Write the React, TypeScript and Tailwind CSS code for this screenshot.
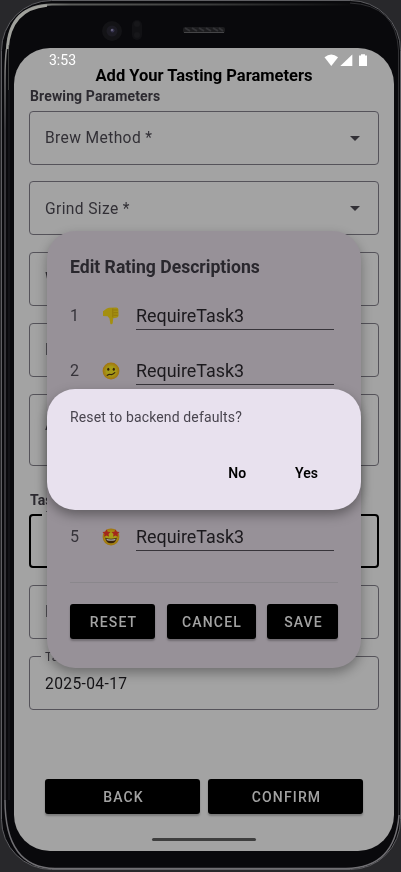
import React from "react";

function Field({ label, value, caret, className = "", floating }: { label?: string; value?: string; caret?: boolean; className?: string; floating?: string }) {
  return (
    <div className={`relative flex w-[350px] shrink-0 items-center justify-between rounded-[4px] px-[15px] text-[15.6px] tracking-[0.37px] ${className}`}>
      {floating && (
        <span className="absolute -top-[8px] left-[11px] bg-[#a3a3a3] px-[4px] text-[12px] leading-[16px] tracking-[0.3px] text-[#38363c]">{floating}</span>
      )}
      {label && <span className="pt-[2px] text-[#323036]">{label}</span>}
      {value && <span className="pt-[3px] text-[#141316]">{value}</span>}
      {caret && (
        <svg width="10" height="5" viewBox="0 0 10 5" className="mr-[3px]">
          <path d="M0 0H10L5 5Z" fill="#323036" />
        </svg>
      )}
    </div>
  );
}

function Button({ children, className }: { children: React.ReactNode; className: string }) {
  return (
    <div className={`flex h-[35px] items-center justify-center rounded-[3px] bg-black pt-[2px] pl-[2px] text-[14px] font-medium tracking-[1.15px] text-[#a3a3a3] shadow-[0_2px_2px_rgba(0,0,0,0.25)] ${className}`}>
      {children}
    </div>
  );
}

function ThumbDown() {
  return (
    <svg width="18" height="18" viewBox="0 0 18 18">
      <path d="M1 4.2 4.8 1.6 7 .8 14 .5Q16.2.4 16.4 2.5L16.6 8.3Q16.5 10.6 14.4 10.7L11.2 11.2 10.7 16.2Q9.7 18.1 8.3 16.7L7.5 11.4 5.5 9.3 1 9Z" fill="#a48f10" />
      <path d="M11.5 3H15.8M11.5 5.7H16M11.5 8.3H15.8M10.8 1.5V10.5" stroke="#8c7009" strokeWidth=".7" fill="none" />
    </svg>
  );
}

function Face({ kind }: { kind: "unsure" | "star" }) {
  return (
    <svg width="18" height="18" viewBox="0 0 18 18">
      <defs>
        <radialGradient id={`face-${kind}`}>
          <stop offset="0.5" stopColor="#a69c18" />
          <stop offset="1" stopColor="#a1730e" />
        </radialGradient>
      </defs>
      <circle cx="9" cy="9" r="8.4" fill={`url(#face-${kind})`} />
      {kind === "star" ? (
        <>
          <path d="M4.5 1.3 5.7 3.8 8.6 4.1 6.5 6.1 7.1 8.8 4.6 7.5 2 8.8 2.5 6 .4 4.1 3.4 3.7ZM13.5 1.3 14.7 3.8 17.6 4.1 15.5 6.1 16.1 8.8 13.4 7.5 11 8.8 11.5 6 9.4 4.1 12.4 3.7Z" fill="#a3271c" />
          <path d="M3.2 9.7Q9 11.6 14.8 9.7 14 15.2 9 15.2T3.2 9.7" fill="#38200a" />
          <path d="M4.3 10.7Q9 12.1 13.7 10.7L13.2 12.2Q9 13.2 4.8 12.2Z" fill="#a3a3a3" />
        </>
      ) : (
        <>
          <ellipse cx="6.3" cy="7.2" rx="1.1" ry="1.5" fill="#35220a" />
          <ellipse cx="11.8" cy="7.2" rx="1.1" ry="1.5" fill="#35220a" />
          <path d="M5.2 13.4Q7 11.8 8.7 12.5T12.8 10.7" stroke="#35220a" strokeWidth="1.2" strokeLinecap="round" fill="none" />
        </>
      )}
    </svg>
  );
}

function StatusBar() {
  return (
    <div className="flex h-[20px] items-center justify-between pt-[4px] pr-[26px] pl-[35px]">
      <span className="text-[14px] leading-[16px] text-white">3:53</span>
      <svg width="44" height="13" viewBox="0 0 44 13" fill="white" className="mt-px">
        <path d="M.5 3.3Q7.2-2.3 14.1 3.3L7.3 12Z" />
        <path d="M28.3.5V12H16.3Z" />
        <path d="M35 1.5H37V.3H41V1.5H43V12H35Z" />
      </svg>
    </div>
  );
}

function RatingRow({ n, icon }: { n: number; icon: React.ReactNode }) {
  return (
    <div className="flex h-[55.33px] items-center">
      <span className="w-[32px] text-[16px] text-[#36333a]">{n}</span>
      <span className="w-[34px]">{icon}</span>
      <span className="flex h-[28px] w-[198px] items-center border-b border-[#37343a] pt-[2px] text-[17.9px] text-[#1b191d]">RequireTask3</span>
    </div>
  );
}

function RatingDialog() {
  return (
    <div className="absolute top-[231px] left-[47px] flex h-[437px] w-[314px] flex-col rounded-[28px] bg-[#979198] px-[23px] pt-[24px] shadow-[0_5px_12px_rgba(0,0,0,0.32)]">
      <div className="text-[17.6px] leading-[24px] font-bold text-[#29272d]">Edit Rating Descriptions</div>
      <div className="mt-[9px] flex flex-col">
        <RatingRow n={1} icon={<ThumbDown />} />
        <RatingRow n={2} icon={<Face kind="unsure" />} />
        <div className="h-[110.67px]" />
        <RatingRow n={5} icon={<Face kind="star" />} />
      </div>
      <div className="mt-[17px] h-px w-[268px] bg-[#8a878c]" />
      <div className="mt-[21px] flex w-[268px] justify-between">
        <Button className="w-[85px]">RESET</Button>
        <Button className="w-[89px]">CANCEL</Button>
        <Button className="w-[71px]">SAVE</Button>
      </div>
    </div>
  );
}

function ConfirmDialog() {
  return (
    <div className="absolute top-[389px] left-[47px] flex h-[121px] w-[314px] flex-col justify-between rounded-[28px] bg-[#e8e1ee] px-[23px] pt-[18px] pb-[26px] shadow-[0_5px_12px_rgba(0,0,0,0.36)]">
      <div className="text-[14px] leading-[20px] tracking-[0.14px] text-[#49454f]">Reset to backend defaults?</div>
      <div className="flex justify-end gap-[49px] pr-[20px] text-[14px] leading-[21px] font-semibold text-black">
        <span>No</span>
        <span>Yes</span>
      </div>
    </div>
  );
}

function Bezel() {
  return (
    <svg className="absolute inset-0" width="401" height="872" viewBox="0 0 401 872" fill="none">
      <defs>
        <linearGradient id="glint" gradientUnits="userSpaceOnUse" x1="0" x2="350" y1="0" y2="0">
          <stop offset="0" stopColor="#8f8f8d" />
          <stop offset="0.06" stopColor="#a2a39f" />
          <stop offset="0.2" stopColor="#5c5d5b" />
          <stop offset="0.6" stopColor="#3a3b3b" />
          <stop offset="1" stopColor="#0c0c0e" />
        </linearGradient>
        <linearGradient id="side" gradientUnits="userSpaceOnUse" x1="0" x2="0" y1="45" y2="130">
          <stop offset="0" stopColor="#91918f" />
          <stop offset="1" stopColor="#47464b" />
        </linearGradient>
      </defs>
      <rect x="1.5" y="0.5" width="399" height="869" rx="50" fill="#09090c" stroke="#5e5e62" />
      <path d="M7 49Q9 5 52 4.500H350" stroke="url(#glint)" strokeWidth="2" />
      <path d="M7.500 49Q10 9 47 5.500" stroke="#a1a29d" strokeWidth="2.500" />
      <path d="M6.500 49Q5 60 5 80V800" stroke="url(#side)" strokeWidth="1.500" />
      <path d="M8.500 45V90" stroke="#5f605e" strokeWidth="1" opacity=".6" />
      <path d="M9 90V800" stroke="#1f1f22" strokeWidth="1" />
      <path d="M5 800Q5 868 55 868.500H346Q395 868 399 815" stroke="#717074" strokeWidth="1.500" />
      <path d="M350 3Q396 5 398.500 50V815" stroke="#303033" strokeWidth="1" />
      <circle cx="112" cy="31" r="10" fill="#131316" />
      <circle cx="112" cy="31" r="5.500" fill="#1c1b23" />
      <circle cx="112.500" cy="30.500" r="2" fill="#35324d" />
      <circle cx="112" cy="30" r=".8" fill="#9693ad" />
      <rect x="132" y="20" width="10" height="20" rx="5" fill="#111114" />
      <circle cx="137" cy="24" r="3" fill="#17171a" />
      <circle cx="137" cy="35" r="3" fill="#17171a" />
      <rect x="183" y="27" width="42" height="6" rx="2" fill="#1c1c1e" />
      <path d="M185 28L190 31M192 28L197 31M199 28L204 31M206 28L211 31M213 28L218 31M219 28L223 31" stroke="#333336" strokeWidth="2" />
      <path d="M184 32.500H224" stroke="#454547" strokeWidth="1" />
    </svg>
  );
}

export default function App() {
  return (
    <div className="relative h-[872px] w-[401px] overflow-hidden bg-[#28282b] pt-[48px] pl-[14px] font-['Roboto','Noto_Sans',sans-serif]">
      <Bezel />
      <div className="relative flex h-[803px] w-[380px] flex-col overflow-hidden rounded-[36px] bg-[#a3a3a3] will-change-transform">
        <StatusBar />
        <div className="h-[16px] text-center text-[16.5px] leading-[16px] font-bold text-black">Add Your Tasting Parameters</div>
        <div className="flex flex-col pl-[15px]">
          <div className="mt-[2px] h-[20px] pl-px text-[14px] leading-[20px] font-bold tracking-[0.13px] text-[#2c2a30]">Brewing Parameters</div>
          <Field className="mt-[5px] h-[54px] border border-[#55535a]" label="Brew Method *" caret />
          <Field className="mt-[16px] h-[54px] border border-[#55535a] pt-px" label="Grind Size *" caret />
          <Field className="mt-[17px] h-[54px] border border-[#55535a]" label="Wt *" />
          <Field className="mt-[17px] h-[54px] border border-[#55535a]" label="Brew" />
          <Field className="mt-[17px] h-[72px] border border-[#55535a] pb-[11px]" label="Age" />
          <div className="mt-[24px] h-[20px] pl-px text-[14px] leading-[20px] font-bold text-[#2c2a30]">Tasting Parameters</div>
          <Field className="mt-[4px] h-[54px] border-2 border-black" floating="Taster" />
          <Field className="mt-[17px] h-[54px] border border-[#55535a]" label="Bean" />
          <Field className="mt-[17px] h-[54px] border border-[#55535a]" floating="Tasting Date" value="2025-04-17" />
        </div>
        <div className="mt-[69px] flex gap-[8px] pl-[31px]">
          <Button className="w-[155px]">BACK</Button>
          <Button className="w-[155px]">CONFIRM</Button>
        </div>
        <div className="mt-[24px] ml-[138px] h-[3px] w-[104px] shrink-0 rounded-full bg-[#3e3e3e]" />
      </div>
      <RatingDialog />
      <ConfirmDialog />
    </div>
  );
}
